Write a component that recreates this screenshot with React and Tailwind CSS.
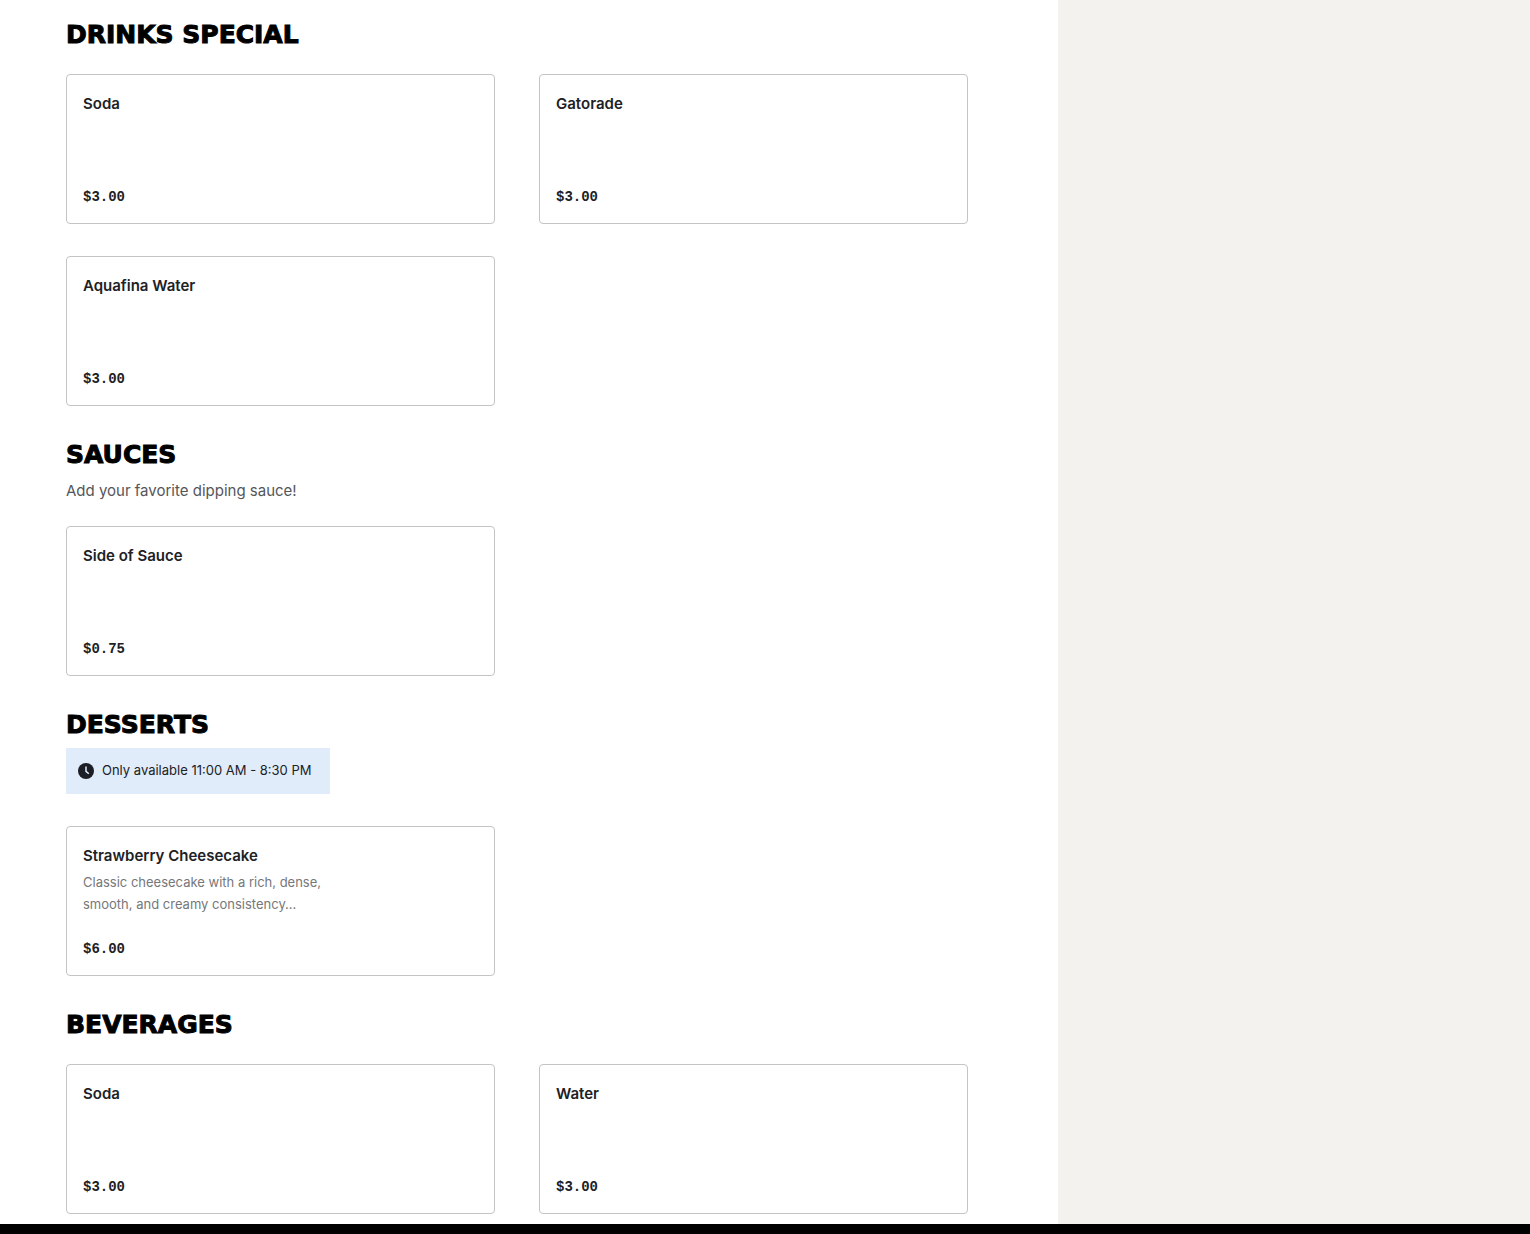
import React from 'react';

const menuSections = [
    {
        title: 'Drinks Special',
        items: [
            { name: 'Soda', price: 3 },
            { name: 'Gatorade', price: 3 },
            { name: 'Aquafina Water', price: 3 },
        ],
    },
    {
        title: 'Sauces',
        description: 'Add your favorite dipping sauce!',
        items: [{ name: 'Side of Sauce', price: 0.75 }],
    },
    {
        title: 'Desserts',
        availability: 'Only available 11:00 AM - 8:30 PM',
        items: [
            {
                name: 'Strawberry Cheesecake',
                description: 'Classic cheesecake with a rich, dense, smooth, and creamy consistency...',
                price: 6,
            },
        ],
    },
    {
        title: 'Beverages',
        items: [
            { name: 'Soda', price: 3 },
            { name: 'Water', price: 3 },
        ],
    },
];

const ClockIcon = () => (
    <svg className="w-4 h-4 shrink-0" viewBox="0 0 16 16" fill="none" aria-hidden="true">
        <circle cx="8" cy="8" r="8" fill="#1b1e24" />
        <path d="M8 3.6V8.3L10.8 10.8" stroke="#e0ecfa" strokeWidth="1.5" />
    </svg>
);

const MenuItem = ({ item }) => (
    <button
        type="button"
        className="flex flex-col items-start h-[150px] px-4 pt-4 pb-[14px] text-left bg-white border border-[#c4c4c4] rounded-[4px] cursor-pointer"
    >
        <span className="text-[15px] leading-[26px] font-semibold text-[#202125]">{item.name}</span>
        {item.description && (
            <span className="mt-[2px] max-w-[264px] text-[13px] leading-[22px] text-[#76777a]">{item.description}</span>
        )}
        <span className="mt-auto font-['Liberation_Mono',monospace] text-sm leading-6 font-bold text-[#202125]">
            ${item.price.toFixed(2)}
        </span>
    </button>
);

const MenuSection = ({ section }) => (
    <section>
        <h2 className="font-['DejaVu_Sans',sans-serif] text-[25px] leading-[34px] font-black uppercase text-black [-webkit-text-stroke:1px_black]">
            {section.title}
        </h2>
        {section.description && (
            <p className="mt-[6px] text-[15px] leading-[26px] text-[#55565a]">{section.description}</p>
        )}
        {section.availability && (
            <div className="mt-[6px] mb-8 w-fit h-[46px] flex items-center gap-2 pl-3 pr-[18px] bg-[#e0ecfa] text-[13px] text-[#202125]">
                <ClockIcon />
                <span>{section.availability}</span>
            </div>
        )}
        <div className="mt-[22px] grid grid-cols-2 gap-x-11 gap-y-8">
            {section.items.map((item) => (
                <MenuItem key={item.name} item={item} />
            ))}
        </div>
    </section>
);

const App = () => {
    return (
        <div className="min-h-screen flex flex-col bg-white font-['Inter',sans-serif]">
            <div className="flex-1 flex">
                <main className="flex-1 flex flex-col gap-8 pt-[18px] pb-[10px] pl-[66px] pr-[90px]">
                    {menuSections.map((section) => (
                        <MenuSection key={section.title} section={section} />
                    ))}
                </main>
                <aside className="w-[472px] shrink-0 bg-[#f3f2ee]" />
            </div>
            <footer className="h-[10px] bg-black" />
        </div>
    );
};

export default App;
